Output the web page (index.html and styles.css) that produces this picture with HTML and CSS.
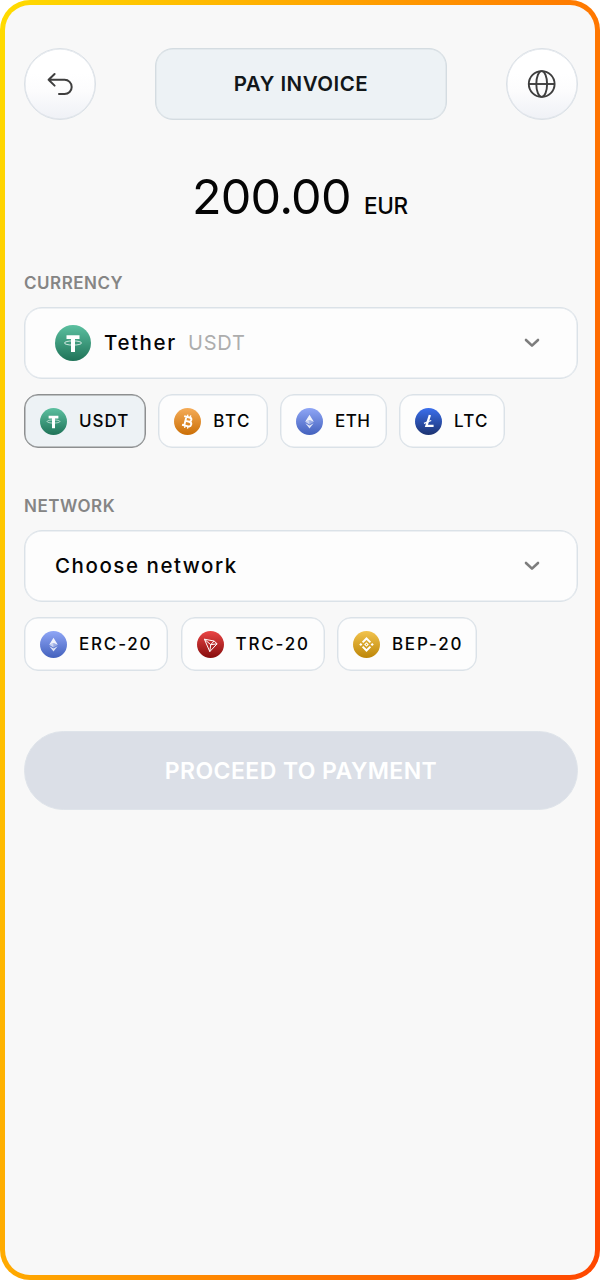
FILE: index.html
```html
<!DOCTYPE html>
<html lang="en">
<head>
<meta charset="utf-8">
<title>Pay invoice</title>
<link rel="stylesheet" href="styles.css">
</head>
<body>
<svg class="defs" width="0" height="0" aria-hidden="true">
  <defs>
    <linearGradient id="g-usdt" x1="0" y1="0" x2="0" y2="1"><stop offset="0" stop-color="#5cc0a0"/><stop offset="1" stop-color="#1f7358"/></linearGradient>
    <linearGradient id="g-btc" x1="0" y1="0" x2="0" y2="1"><stop offset="0" stop-color="#f5ac58"/><stop offset="1" stop-color="#cb6f06"/></linearGradient>
    <linearGradient id="g-eth" x1="0" y1="0" x2="0" y2="1"><stop offset="0" stop-color="#8fa6f6"/><stop offset="1" stop-color="#4361bd"/></linearGradient>
    <linearGradient id="g-ltc" x1="0" y1="0" x2="0" y2="1"><stop offset="0" stop-color="#3b6fed"/><stop offset="1" stop-color="#1c3371"/></linearGradient>
    <linearGradient id="g-trx" x1="0" y1="0" x2="0" y2="1"><stop offset="0" stop-color="#ea4545"/><stop offset="1" stop-color="#860c0c"/></linearGradient>
    <linearGradient id="g-bnb" x1="0" y1="0" x2="0" y2="1"><stop offset="0" stop-color="#f2c34d"/><stop offset="1" stop-color="#bd8608"/></linearGradient>
    <symbol id="usdt" viewBox="0 0 36 36">
      <circle cx="18" cy="18" r="18" fill="url(#g-usdt)"/>
      <path d="M11.5 10.3h13v3.6h-4.5v13.2h-4v-13.2h-4.5z" fill="#fff"/>
      <ellipse cx="18" cy="18" rx="8.6" ry="2.1" fill="none" stroke="#fff" stroke-opacity=".75" stroke-width="1"/>
    </symbol>
    <symbol id="btc" viewBox="0 0 27 27">
      <circle cx="13.5" cy="13.5" r="13.5" fill="url(#g-btc)"/>
      <g transform="rotate(14 13.5 13.5)" fill="none" stroke="#fff" stroke-width="1.9">
        <path d="M9 9.1h5.6c3 0 3 4.2 0 4.2h-3.2 3.9c3.4 0 3.4 4.7 0 4.7H9M11.3 9v9"/>
        <path d="M12.2 6.7V9m3-2.3V9m-3 9v2.4m3-2.4v2.4" stroke-width="1.3"/>
      </g>
    </symbol>
    <symbol id="eth" viewBox="0 0 27 27">
      <circle cx="13.5" cy="13.5" r="13.5" fill="url(#g-eth)"/>
      <path d="M13.5 6.7 9.2 13.8l4.3-1.8 4.3 1.8z" fill="#fff" fill-opacity=".9"/>
      <path d="m9.2 13.8 4.3-1.8v4.4z" fill="#fff" fill-opacity=".65"/>
      <path d="m17.8 13.8-4.3-1.8v4.4z" fill="#fff" fill-opacity=".35"/>
      <path d="m9.4 15.2 4.1 2.4v2.9zm8.2 0-4.1 2.4v2.9z" fill="#fff" fill-opacity=".8"/>
    </symbol>
    <symbol id="ltc" viewBox="0 0 27 27">
      <circle cx="13.5" cy="13.5" r="13.5" fill="url(#g-ltc)"/>
      <path d="M14.9 7 11.4 17.9h7.2" fill="none" stroke="#fff" stroke-width="2.3"/>
      <path d="m9 15.4 7.2-2.9" stroke="#fff" stroke-width="1.2"/>
    </symbol>
    <symbol id="trx" viewBox="0 0 27 27">
      <circle cx="13.5" cy="13.5" r="13.5" fill="url(#g-trx)"/>
      <path d="m7.4 8.2 9.7 1.8 3 2.8-7.3 7.8zM7.4 8.2l6.3 5.5-.9 6.9m.9-6.9 3.4-3.7m-3.4 3.7 6.4-.9" fill="none" stroke="#fff" stroke-width="1" stroke-linejoin="round"/>
    </symbol>
    <symbol id="bnb" viewBox="0 0 27 27">
      <circle cx="13.5" cy="13.5" r="13.5" fill="url(#g-bnb)"/>
      <path d="m9.6 11.4 3.9-3.9 3.9 3.9m-7.8 4.2 3.9 3.9 3.9-3.9" fill="none" stroke="#fff" stroke-width="2"/>
      <path d="m13.5 11.2 2.3 2.3-2.3 2.3-2.3-2.3z" fill="#fff"/>
      <circle cx="13.5" cy="13.5" r=".65" fill="#d9a128"/>
      <path d="m7.8 11.9 1.6 1.6-1.6 1.6-1.6-1.6zm11.4 0 1.6 1.6-1.6 1.6-1.6-1.6z" fill="#fff"/>
    </symbol>
  </defs>
</svg>
<div class="frame">
  <main class="screen">
    <header class="header">
      <button class="round" aria-label="Back">
        <svg width="28" height="26" viewBox="0 0 28 26"><path d="M8.6 3 2.6 8.8 8.6 14.6M2.6 8.8h16a7.1 7.1 0 0 1 0 14.2H13" fill="none" stroke="#3e3e3e" stroke-width="2" stroke-linecap="round" stroke-linejoin="round"/></svg>
      </button>
      <h1 class="title"><span>PAY INVOICE</span></h1>
      <button class="round" aria-label="Language">
        <svg width="30" height="30" viewBox="0 0 30 30" fill="none" stroke="#3e3e3e" stroke-width="1.9"><circle cx="14.7" cy="15" r="12.9"/><ellipse cx="14.7" cy="15" rx="5.4" ry="12.9"/><path d="M2 15h25.5"/></svg>
      </button>
    </header>
    <div class="amount"><span class="value">200.00</span><span class="unit">EUR</span></div>

    <section class="group">
      <h2 class="label">CURRENCY</h2>
      <div class="select">
        <svg class="coin-lg"><use href="#usdt"/></svg>
        <span class="name tether">Tether</span><span class="code">USDT</span>
        <svg class="chevron" viewBox="0 0 18 12"><path d="m3 3 6 5.6L15 3"/></svg>
      </div>
      <div class="chips">
        <button class="chip active w-usdt"><svg class="coin"><use href="#usdt"/></svg><span>USDT</span></button>
        <button class="chip w-btc"><svg class="coin"><use href="#btc"/></svg><span>BTC</span></button>
        <button class="chip w-eth"><svg class="coin"><use href="#eth"/></svg><span>ETH</span></button>
        <button class="chip w-ltc"><svg class="coin"><use href="#ltc"/></svg><span>LTC</span></button>
      </div>
    </section>

    <section class="group">
      <h2 class="label">NETWORK</h2>
      <div class="select">
        <span class="name choose">Choose network</span>
        <svg class="chevron" viewBox="0 0 18 12"><path d="m3 3 6 5.6L15 3"/></svg>
      </div>
      <div class="chips">
        <button class="chip wide w-erc"><svg class="coin"><use href="#eth"/></svg><span>ERC-20</span></button>
        <button class="chip wide w-trc"><svg class="coin"><use href="#trx"/></svg><span>TRC-20</span></button>
        <button class="chip wide w-bep"><svg class="coin"><use href="#bnb"/></svg><span>BEP-20</span></button>
      </div>
    </section>

    <button class="proceed" disabled><span>PROCEED TO PAYMENT</span></button>
  </main>
</div>
</body>
</html>
```

FILE: styles.css
```css
* { box-sizing: border-box; }
body { margin: 0; background: #fff; font-family: Inter, sans-serif; color: #050505; }
button { font: inherit; color: inherit; margin: 0; padding: 0; }
.defs { display: block; }
.frame {
  width: 600px; height: 1280px; padding: 5px; border-radius: 30px;
  background: linear-gradient(103deg, #ffdc00, #ff4600);
}
.screen {
  height: 1270px; padding: 43px 17px 0 19px; border-radius: 25px;
  background: #f8f8f8; display: flex; flex-direction: column;
}
.header { display: flex; justify-content: space-between; height: 72px; }
.round {
  width: 72px; height: 72px; border-radius: 50%; border: 1px solid #dae0e6;
  box-shadow: inset 0 0 0 .5px #dde2e8;
  background: linear-gradient(#fff 35%, #fcfcfd 60%, #eff1f6);
  display: flex; align-items: center; justify-content: center;
}
.title {
  width: 292px; margin: 0; padding-bottom: 2px; border: 1px solid #d4dce1; border-radius: 18px; background: #edf2f5;
  box-shadow: inset 0 0 0 .5px #d9e0e5;
  display: flex; align-items: center; justify-content: center;
  font-size: 20.5px; font-weight: 600; letter-spacing: .5px; color: #12171a;
}
.amount {
  height: 80px; margin-top: 37px; line-height: 80px; white-space: nowrap;
  display: flex; align-items: baseline; padding-left: 168px;
}
.value { font-size: 48.5px; width: 172px; letter-spacing: -.8px; }
.unit { font-size: 22.5px; font-weight: 500; letter-spacing: -.3px; }
.group { margin-top: 36px; display: flex; flex-direction: column; }
.group + .group { margin-top: 48px; }
.label { margin: 0 0 15px; height: 19px; line-height: 20px; font-size: 17px; font-weight: 600; letter-spacing: .5px; color: #858585; }
.select {
  height: 72px; border: 1px solid #dbe2e8; border-radius: 18px; background: #fdfdfd;
  box-shadow: inset 0 0 0 .5px #dee4ea;
  display: flex; align-items: center; padding: 0 36px 0 30px; white-space: nowrap;
}
.coin-lg { width: 36px; height: 36px; margin-right: 13px; }
.name { font-size: 20.5px; font-weight: 500; padding-bottom: 2px; }
.tether { width: 84px; letter-spacing: 1.6px; }
.choose { letter-spacing: 1.55px; }
.code { font-size: 20px; color: #adadad; letter-spacing: .8px; }
.chevron { width: 18px; height: 12px; margin-left: auto; fill: none; stroke: #7d7d7d; stroke-width: 2.6; stroke-linecap: round; stroke-linejoin: round; }
.chips { display: flex; gap: 12.3px; margin-top: 15px; }
.chip {
  height: 54px; border: 1px solid #dbe2e8; border-radius: 14px; background: #fdfdfd;
  box-shadow: inset 0 0 0 .5px #dee4ea;
  display: flex; align-items: center; gap: 12px; padding-left: 15px;
  font-size: 17px; font-weight: 500; letter-spacing: 1px; white-space: nowrap;
}
.chip.active { background: #edf2f5; border-color: #8d8f90; box-shadow: inset 0 0 0 .5px #8d8f90; }
.coin { width: 27px; height: 27px; }
.chip.wide { letter-spacing: 1.8px; }
.w-usdt { width: 122px; }
.w-btc { width: 109.5px; }
.chip.w-btc { letter-spacing: 1.5px; }
.w-eth { width: 106.5px; }
.chip.w-eth { letter-spacing: .4px; }
.w-ltc { width: 106.5px; }
.chip.w-ltc { letter-spacing: 1.3px; }
.w-erc { width: 144.3px; }
.w-trc { width: 144px; }
.w-bep { width: 140px; }
.proceed {
  height: 79px; margin-top: 60px; border: 1px solid #dfe4ea; border-radius: 40px; background: #dbdfe7;
  color: #fff; font-size: 23px; font-weight: 600; letter-spacing: .42px;
}
```
